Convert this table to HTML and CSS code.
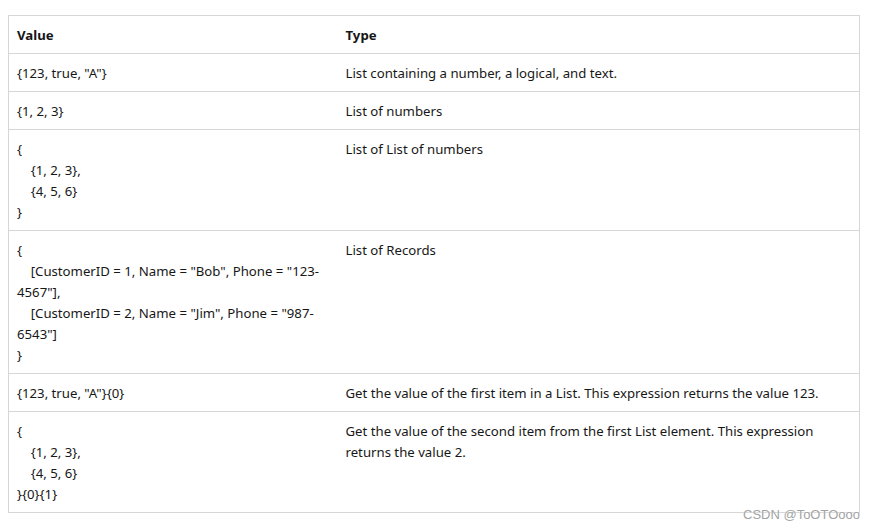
FILE: index.html
```html
<!DOCTYPE html>
<html lang="en">
<head>
    <meta charset="UTF-8">
    <meta name="viewport" content="width=device-width, initial-scale=1.0">
    <title>List values</title>
    <link rel="stylesheet" href="styles.css">
</head>
<body>
    <div class="page">
        <table class="value-table">
            <colgroup>
                <col class="col-value">
                <col class="col-type">
            </colgroup>
            <thead>
                <tr>
                    <th>Value</th>
                    <th>Type</th>
                </tr>
            </thead>
            <tbody>
                <tr>
                    <td>{123, true, "A"}</td>
                    <td>List containing a number, a logical, and text.</td>
                </tr>
                <tr>
                    <td>{1, 2, 3}</td>
                    <td>List of numbers</td>
                </tr>
                <tr>
                    <td>{<br>&nbsp;&nbsp;&nbsp;&nbsp;{1, 2, 3},<br>&nbsp;&nbsp;&nbsp;&nbsp;{4, 5, 6}<br>}</td>
                    <td>List of List of numbers</td>
                </tr>
                <tr>
                    <td>{<br>&nbsp;&nbsp;&nbsp;&nbsp;[CustomerID = 1, Name = "Bob", Phone = "123-4567"],<br>&nbsp;&nbsp;&nbsp;&nbsp;[CustomerID = 2, Name = "Jim", Phone = "987-6543"]<br>}</td>
                    <td>List of Records</td>
                </tr>
                <tr>
                    <td>{123, true, "A"}{0}</td>
                    <td>Get the value of the first item in a List. This expression returns the value 123.</td>
                </tr>
                <tr>
                    <td>{<br>&nbsp;&nbsp;&nbsp;&nbsp;{1, 2, 3},<br>&nbsp;&nbsp;&nbsp;&nbsp;{4, 5, 6}<br>}{0}{1}</td>
                    <td>Get the value of the second item from the first List element. This expression returns the value 2.</td>
                </tr>
            </tbody>
        </table>
        <span class="watermark">CSDN @ToOTOooo</span>
    </div>
</body>
</html>
```

FILE: styles.css
```css
* {
    box-sizing: border-box;
    margin: 0;
    padding: 0;
}

body {
    background-color: #fff;
    font-family: 'Noto Sans', 'Open Sans', sans-serif;
    font-size: 13.2px;
    color: #171717;
    min-height: 530px;
}

.page {
    position: relative;
    width: 873px;
    height: 530px;
    padding: 15px 0 0 8px;
}

.value-table {
    width: 852px;
    border-collapse: collapse;
    table-layout: fixed;
    border: 1px solid #d6d6d6;
}

.col-value {
    width: 329px;
}

.value-table th,
.value-table td {
    text-align: left;
    vertical-align: top;
    padding: 9px 8px 7px;
    line-height: 21px;
    border-bottom: 1px solid #d6d6d6;
}

.value-table th {
    font-weight: bold;
    color: #161616;
}

.watermark {
    position: absolute;
    left: 743px;
    top: 507px;
    font-family: 'Liberation Sans', sans-serif;
    font-size: 13px;
    color: #a3a3a3;
    text-shadow: 0 0 2px #fff;
}
```
